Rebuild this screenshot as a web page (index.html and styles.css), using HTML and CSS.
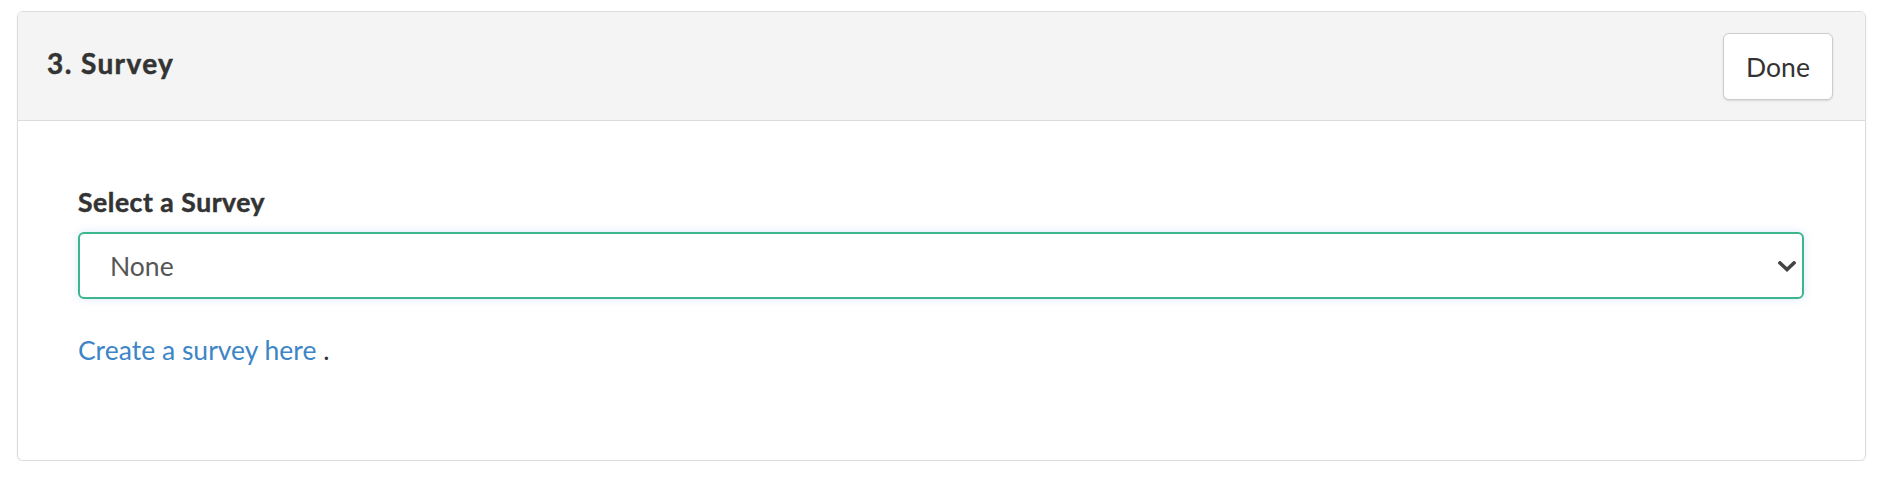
FILE: index.html
```html
<!DOCTYPE html>
<html lang="en">
<head>
    <meta charset="UTF-8">
    <title>Survey</title>
    <link rel="stylesheet" href="styles.css">
</head>
<body>
    <div class="panel">
        <div class="panel-header">
            <h3 class="panel-title">3. Survey</h3>
            <button class="btn-done" type="button">Done</button>
        </div>
        <div class="panel-body">
            <label class="field-label" for="surveySelect">Select a Survey</label>
            <div class="select-wrap">
                <select id="surveySelect" class="survey-select">
                    <option>None</option>
                </select>
                <svg class="chevron" width="18" height="11" viewBox="0 0 18 11">
                    <polyline points="2,2 9,8.5 16,2" fill="none" stroke="#444" stroke-width="3.6" stroke-linecap="square"/>
                </svg>
            </div>
            <p class="create-link"><a href="#">Create a survey here</a> .</p>
        </div>
    </div>
</body>
</html>
```

FILE: styles.css
```css
* {
    margin: 0;
    padding: 0;
    box-sizing: border-box;
}
body {
    font-family: 'Lato', sans-serif;
    font-size: 26.5px;
    line-height: 36px;
    color: #333;
    background: #fff;
    padding: 11px 16px 0 17px;
}
.panel {
    border: 1px solid #dcdcdc;
    border-radius: 6px;
    box-shadow: 0 1px 2px rgba(0, 0, 0, 0.08);
    overflow: hidden;
}
.panel-header {
    display: flex;
    justify-content: space-between;
    align-items: center;
    background: #f4f4f4;
    border-bottom: 1px solid #dcdcdc;
    padding: 21px 32px 20px 29px;
}
.panel-title {
    font-size: 28px;
    font-weight: bold;
    letter-spacing: 1.4px;
    -webkit-text-stroke: 0.5px #333;
    color: #333;
    padding-bottom: 7px;
}
.btn-done {
    font-family: inherit;
    font-size: 26.5px;
    color: #333;
    background: #fff;
    border: 1px solid #ccc;
    border-radius: 6px;
    box-shadow: 0 1px 2px rgba(0, 0, 0, 0.12);
    width: 110px;
    height: 67px;
    cursor: pointer;
}
.panel-body {
    padding: 63px 61px 92px 60px;
}
.field-label {
    display: block;
    font-weight: bold;
    letter-spacing: 0.55px;
    -webkit-text-stroke: 0.5px #333;
    margin-bottom: 12px;
}
.select-wrap {
    position: relative;
}
.survey-select {
    appearance: none;
    -webkit-appearance: none;
    width: 100%;
    height: 67px;
    font-family: inherit;
    font-size: 26.5px;
    color: #555;
    background: #fff;
    border: 2px solid #3db68e;
    border-radius: 6px;
    padding: 0 30px;
    box-shadow: 0 0 10px rgba(90, 150, 230, 0.22);
    outline: none;
}
.chevron {
    position: absolute;
    right: 8px;
    top: 29px;
}
.create-link {
    margin-top: 33px;
}
a {
    color: #3d85c6;
    text-decoration: none;
}
```
